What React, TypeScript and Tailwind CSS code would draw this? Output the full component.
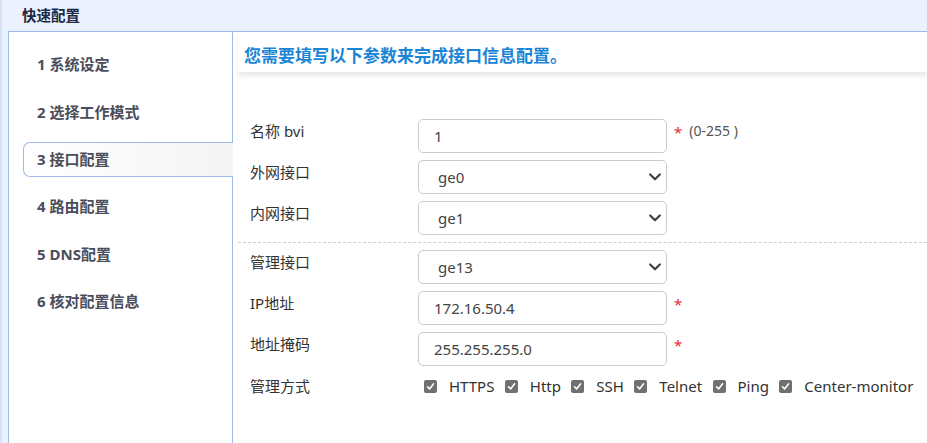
import React from "react";

const font = { fontFamily: '"Noto Sans", "Noto Sans CJK SC", sans-serif' };

const steps = ["1 系统设定", "2 选择工作模式", "3 接口配置", "4 路由配置", "5 DNS配置", "6 核对配置信息"];
const methods = ["HTTPS", "Http", "SSH", "Telnet", "Ping", "Center-monitor"];

function Chevron() {
  return (
    <svg width="12" height="8" viewBox="0 0 12 8" className="shrink-0">
      <path d="M1.2 1.5 6 6.2 10.8 1.5" fill="none" stroke="#3f3f3f" strokeWidth="2.2" strokeLinecap="round" strokeLinejoin="round" />
    </svg>
  );
}

function Check() {
  return (
    <span className="flex h-[13px] w-[13px] shrink-0 items-center justify-center rounded-[2px] bg-[#707070]">
      <svg width="9" height="9" viewBox="0 0 9 9">
        <path d="M1.5 4.8 3.6 6.9 7.6 1.8" fill="none" stroke="#fff" strokeWidth="1.6" strokeLinecap="round" strokeLinejoin="round" />
      </svg>
    </span>
  );
}

function Row({ label, children, first }: { label: string; children: React.ReactNode; first?: boolean }) {
  return (
    <div className={`flex items-start ${first ? "" : "mt-[7px]"}`}>
      <div className="w-[168px] shrink-0 pt-[1px] text-[15px] leading-[22px] text-[#333]">{label}</div>
      {children}
    </div>
  );
}

function Input({ value }: { value: string }) {
  return (
    <div className="flex h-[34px] w-[249px] items-center rounded-[5px] border border-[#cccccc] bg-white pl-[15px] text-[15px] text-[#444]">
      {value}
    </div>
  );
}

function Select({ value }: { value: string }) {
  return (
    <div className="flex h-[34px] w-[249px] items-center justify-between rounded-[5px] border border-[#cccccc] bg-white pl-[19px] pr-[5px] text-[15px] text-[#444]">
      <span>{value}</span>
      <Chevron />
    </div>
  );
}

function Star() {
  return <span className="ml-[7px] mt-[2px] text-[15px] leading-[22px] text-[#e8283a]">*</span>;
}

export default function App() {
  return (
    <div style={font} className="flex h-[443px] w-[927px] flex-col overflow-hidden border-l-2 border-[#d3e3f8] bg-[#ebf2fd]">
      <div className="flex h-[31px] shrink-0 items-center pl-[20px] text-[14.5px] font-bold text-[#1b2947]">快速配置</div>
      <div className="ml-[6px] flex flex-1 border-l border-t border-[#9dbbe6] bg-white">
        {/* steps */}
        <div className="w-[224px] shrink-0 border-r border-[#9dbbe6] pt-[15px]">
          <div className="flex flex-col gap-[12.4px]">
            {steps.map((s, i) =>
              i === 2 ? (
                <div
                  key={s}
                  className="relative z-10 -mr-px ml-[14px] flex h-[35px] items-center rounded-l-[7px] border border-r-0 border-[#9dbbe6] bg-gradient-to-r from-white to-[#f4f4f4] pl-[13px] text-[15px] font-bold text-[#4a4d5a]"
                >
                  {s}
                </div>
              ) : (
                <div key={s} className="ml-[14px] flex h-[35px] items-center pl-[14px] text-[15px] font-bold text-[#4a4d5a]">
                  {s}
                </div>
              )
            )}
          </div>
        </div>

        {/* content */}
        <div className="flex-1 pl-[5px]">
          <div className="h-[40px] bg-white pl-[6px] pt-[12px] text-[17px] font-bold leading-[24px] text-[#1a84d6] shadow-[0_4px_5px_rgba(0,0,0,0.09)]">
            您需要填写以下参数来完成接口信息配置。
          </div>
          <div className="pt-[47px]">
            <div className="pl-[12px]">
              <Row label="名称 bvi" first>
                <Input value="1" />
                <Star />
                <span className="ml-[7px] mt-[1px] text-[14px] leading-[22px] text-[#555]">(0-255 )</span>
              </Row>
              <Row label="外网接口">
                <Select value="ge0" />
              </Row>
              <Row label="内网接口">
                <Select value="ge1" />
              </Row>
            </div>
            <div className="my-[7px] border-t border-dashed border-[#cfcfcf]" />
            <div className="pl-[12px]">
              <Row label="管理接口" first>
                <Select value="ge13" />
              </Row>
              <Row label="IP地址">
                <Input value="172.16.50.4" />
                <Star />
              </Row>
              <Row label="地址掩码">
                <Input value="255.255.255.0" />
                <Star />
              </Row>
              <div className="mt-[9px] flex items-center">
                <div className="w-[168px] shrink-0 text-[15px] leading-[22px] text-[#333]">管理方式</div>
                <div className="flex items-center pl-[6px]">
                  {methods.map((m, i) => (
                    <div key={m} className={`flex items-center ${i ? "ml-[10.4px]" : ""}`}>
                      <Check />
                      <span className="ml-[12px] text-[15px] leading-[22px] text-[#333]">{m}</span>
                    </div>
                  ))}
                </div>
              </div>
            </div>
          </div>
        </div>
      </div>
    </div>
  );
}
